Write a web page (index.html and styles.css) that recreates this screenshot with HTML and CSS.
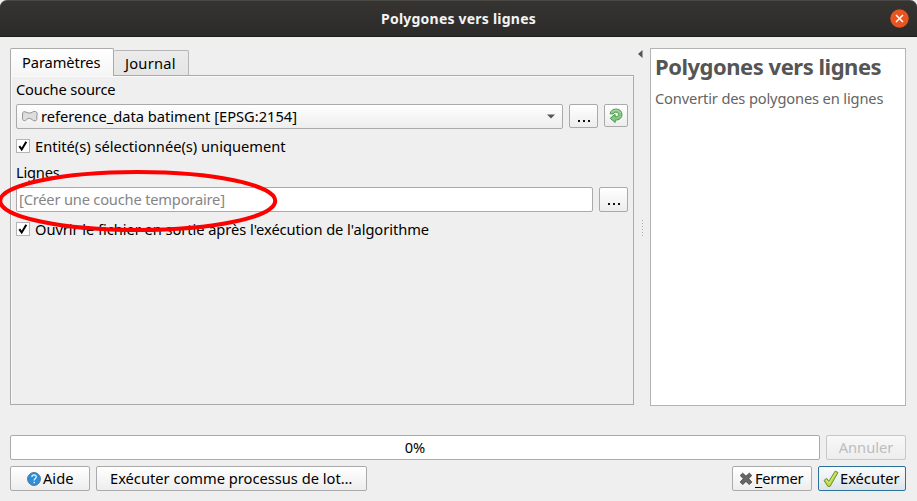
FILE: index.html
```
<!DOCTYPE html>
<html lang="fr">
<head>
<meta charset="utf-8">
<title>Polygones vers lignes</title>
<link rel="stylesheet" href="styles.css">
</head>
<body>
<div class="dialog">
  <header class="titlebar">
    <span class="title">Polygones vers lignes</span>
    <svg class="close" width="19" height="19" viewBox="0 0 19 19"><circle cx="9.5" cy="9.5" r="9.2" fill="#e95420"/><path d="M6 6l7 7M13 6l-7 7" stroke="#fff" stroke-width="1.5"/></svg>
  </header>
  <div class="main">
    <section class="left">
      <div class="tabs">
        <div class="tab active"><span class="t-param">Paramètres</span></div>
        <div class="tab"><span class="t-journal">Journal</span></div>
      </div>
      <div class="pane">
        <div class="label first"><span class="t-source">Couche source</span></div>
        <div class="row">
          <div class="box combo">
            <svg width="18" height="14" viewBox="0 0 18 14"><path d="M1.5 4C1.5 1.6 3.4 1.3 5 2.1C7.8 3.5 9.6 3.3 11.4 2.1C13.3.9 15.8 1.2 16.2 3.3C16.5 4.8 15.5 5.5 15.7 7C16 9 16 10.6 14 10.9C11.7 11.1 10.7 8.4 8.2 8.3C6 8.2 5.5 10.6 3.6 10.7C1.4 10.8 1.4 8.5 1.6 7Z" fill="#dedede" stroke="#929292"/></svg>
            <span class="t-layer">reference_data batiment [EPSG:2154]</span>
            <svg class="arrow" width="8" height="5" viewBox="0 0 8 5"><path d="M0 .5h8L4 4.6z" fill="#555"/></svg>
          </div>
          <div class="box dots short"><i></i><i></i><i></i></div>
          <div class="box refresh"><svg width="14" height="16" viewBox="0 0 14 16"><path d="M1.1 5.8C1.6 2.7 4 1 7.1 1C10.6 1 13 3.4 13 6.6C13 9.8 10.5 12.1 6.2 12.2V14.5L1.2 10.3L6.1 6.3V8.8C8.5 8.8 9.6 7.9 9.5 6.5C9.4 5 8.3 4.2 6.9 4.2C5.5 4.2 4.8 4.8 4.4 5.9Z" fill="#86c87f" stroke="#408e48" stroke-width=".9"/><path d="M2.4 4.7C4.5 1.3 9.8 1.1 11.6 5" fill="none" stroke="#b1dfab"/></svg></div>
        </div>
        <div class="check c1"><span class="tick"><svg width="12" height="12" viewBox="0 0 12 12"><path d="M2.3 6.2L4.7 9.4L9.3 1.8" fill="none" stroke="#000" stroke-width="2"/></svg></span><span class="t-entity">Entité(s) sélectionnée(s) uniquement</span></div>
        <div class="label second"><span class="t-lines">Lignes</span></div>
        <div class="row">
          <div class="box input"><span class="t-create">[Créer une couche temporaire]</span></div>
          <div class="box dots"><i></i><i></i><i></i></div>
        </div>
        <div class="check c2"><span class="tick"><svg width="12" height="12" viewBox="0 0 12 12"><path d="M2.3 6.2L4.7 9.4L9.3 1.8" fill="none" stroke="#000" stroke-width="2"/></svg></span><span class="t-open">Ouvrir le fichier en sortie après l'exécution de l'algorithme</span></div>
      </div>
    </section>
    <div class="splitter">
      <svg class="collapse" width="5" height="8" viewBox="0 0 5 8"><path d="M4.5 0v8L0 4z" fill="#555"/></svg>
      <div class="grip"></div>
    </div>
    <aside class="help">
      <h1><span class="t-heading">Polygones vers lignes</span></h1>
      <p><span class="t-desc">Convertir des polygones en lignes</span></p>
    </aside>
  </div>
  <div class="progress-row">
    <div class="box progress"><span class="t-zero">0%</span></div>
    <div class="box cancel"><span class="t-cancel">Annuler</span></div>
  </div>
  <footer class="buttons">
    <div class="box help-btn"><svg width="14" height="14" viewBox="0 0 14 14"><circle cx="7" cy="7" r="6.4" fill="#2b8fdc" stroke="#4d7187"/><path d="M4.9 5C5 2.3 9.3 2.3 9.3 4.8C9.3 6.5 7.2 6.6 7.2 8.4M7.2 9.7v1.5" fill="none" stroke="#e7f6ff" stroke-width="1.3"/></svg><span class="t-help">Aide</span></div>
    <div class="box batch"><span class="t-batch">Exécuter comme processus de lot…</span></div>
    <div class="box close-btn"><svg width="14" height="14" viewBox="0 0 14 14"><path d="M3.7 1.2L7 4.2L10.3 1.2L12.8 3.5L9.6 6.7L12.8 10L10.3 12.5L7 9.4L3.7 12.5L1.2 10L4.4 6.7L1.2 3.5Z" fill="#666" stroke="#454545" stroke-width=".9"/></svg><span class="t-close"><u>F</u>ermer</span></div>
    <div class="box run"><svg width="16" height="18" viewBox="0 0 16 18"><path d="M1 10.5L3.7 8.4L5.8 11.4L12.2 1.1L15 2.5L7.1 16.4L5 16.5Z" fill="#b9d942" stroke="#6f8f3b"/><path d="M3.2 10L5.9 13.5L12.7 2.8" fill="none" stroke="#d9ec82"/></svg><span class="t-run">Exécuter</span></div>
  </footer>
  <svg class="mark" width="278" height="70" viewBox="0 0 278 70"><ellipse cx="137.7" cy="36" rx="137.5" ry="29" fill="none" stroke="#fe0000" stroke-width="4"/></svg>
</div>
</body>
</html>
```
FILE: styles.css
```
* { box-sizing: border-box; }
body { margin: 0; background: #efefef; color: #000; font: 14.67px/20px "Noto Sans", "Open Sans", sans-serif; overflow: hidden; }
.dialog { position: relative; width: 917px; height: 501px; display: flex; flex-direction: column; white-space: nowrap; }
svg { display: block; flex: none; }
.titlebar { height: 37px; flex: none; display: grid; grid-template-columns: 1fr auto 1fr; align-items: center; color: #f3f3f3; background: linear-gradient(#353431, #2c2b2a); border-top: 1px solid #4a4946; border-bottom: 1px solid #1f1f1e; border-radius: 7px 7px 0 0; font-weight: 700; }
.title { grid-column: 2; font-size: 14px; letter-spacing: .22px; }
.close { justify-self: end; margin-right: 8px; }
.main { display: flex; height: 358px; margin: 11px 11px 0 10px; flex: none; }
.left { width: 624px; display: flex; flex-direction: column; }
.tabs { height: 27px; display: flex; align-items: flex-end; }
.tab { height: 25px; width: 75px; padding: 2px 0 0 11px; background: linear-gradient(#ebebeb, #e5e5e5); border: 1px solid #b5b5b5; border-left: 0; border-bottom: 0; border-radius: 2px 2px 0 0; }
.tab.active { width: 104px; height: 28px; margin-bottom: -1px; padding: 3px 0 0 11px; background: linear-gradient(#fff, #f5f5f5); border: 1px solid #aaa; border-bottom: 0; z-index: 1; }
.pane { height: 330px; border: 1px solid #aaa; box-shadow: inset 1px 1px #fafafa; padding: 0 5px; }
.label { height: 20px; }
.label.first { margin: 3px 0 5px; }
.row { display: flex; gap: 6px; align-items: flex-start; }
.box { height: 25px; display: flex; align-items: center; border: 1px solid #aaa; border-radius: 2px; background: linear-gradient(#fff, #ededed); }
.box span { margin-top: -2px; }
.combo { width: 547px; padding: 0 7px 0 4px; }
.combo span { margin-left: 2px; }
.arrow { margin-left: auto; }
.dots { width: 29px; justify-content: center; align-items: flex-end; gap: 3px; padding-bottom: 6px; }
.dots i { width: 2px; height: 2px; background: #111; }
.dots.short { height: 24px; padding-bottom: 5px; }
.refresh { width: 24px; height: 23px; justify-content: center; }
.check { display: flex; height: 20px; align-items: center; gap: 5px; }
.c1 { margin-top: 7px; }
.c2 { margin-top: 7px; }
.tick { width: 14px; height: 14px; border: 1px solid #b5b5b5; background: #fff; }
.label.second { margin: 6px 0 5px; }
.input { width: 577px; padding-left: 2px; background: #fff; color: #858585; }
.splitter { width: 16px; padding: 2px 0 0 4px; }
.grip { width: 1px; height: 17px; margin: 162px 0 0 4px; background: repeating-linear-gradient(#aaa 0 1px, transparent 1px 3px); }
.help { width: 256px; height: 358px; background: #fff; border: 1px solid #b3b3b3; padding: 4px; color: #646464; }
h1 { margin: 0; font-size: 22px; line-height: 26px; color: #555; letter-spacing: -.48px; }
p { margin: 9px 0 0; }
.t-journal { letter-spacing: .25px; }
.t-param { letter-spacing: -.1px; }
.t-source { letter-spacing: -.15px; }
.t-lines { letter-spacing: -.2px; }
.t-create { letter-spacing: -.19px; }
.t-open { letter-spacing: -.05px; }
.t-desc { letter-spacing: -.15px; }
.t-close { letter-spacing: -.3px; }
.progress-row { display: flex; gap: 6px; margin: 29px 11px 0 10px; }
.progress { width: 810px; justify-content: center; background: #fff; }
.cancel { width: 80px; justify-content: center; color: #bdbdbd; border-color: #c7c7c7; background: linear-gradient(#f8f8f8, #ededed); }
.buttons { display: flex; gap: 6px; margin: 6px 11px 0 10px; }
.help-btn { width: 80px; padding-left: 16px; gap: 2px; }
.batch { width: 271px; padding-left: 13px; }
.close-btn { width: 80px; margin-left: auto; padding-left: 6px; gap: 2px; }
.run { width: 88px; padding-left: 4px; gap: 1px; border-color: #2b7198; background: linear-gradient(#fafcfd, #dce4e9); }
u { text-decoration-thickness: 1px; text-underline-offset: 3px; }
.mark { position: absolute; left: 0; top: 165px; }
```
